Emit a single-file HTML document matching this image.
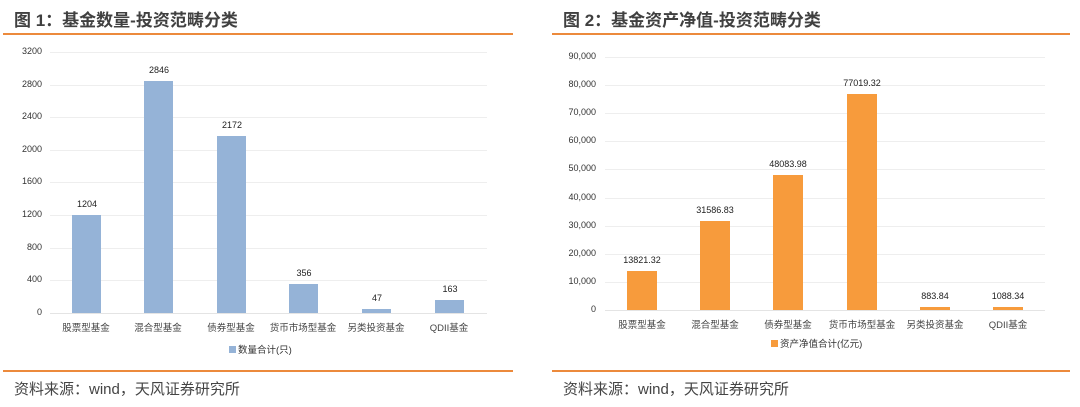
<!DOCTYPE html><html><head><meta charset="utf-8"><style>
body{margin:0;width:1080px;height:407px;background:#fff;position:relative;overflow:hidden;font-family:"Liberation Sans","Noto Sans CJK SC",sans-serif;}
div{position:absolute}
.t{font-size:17px;font-weight:bold;color:#404040;top:6px}
.ol{height:2px;background:#ec8a3c}
.src{font-size:15px;color:#444;top:378px}
.g{height:1px;background:#eee}
.yl{font-size:9px;color:#333;text-align:right;width:50px}
.bb{background:#95b3d7}
.ob{background:#f79b3c}
.v{font-size:9px;color:#222;text-align:center;width:60px}
.c{font-size:9.5px;color:#444;text-align:center;width:80px;top:320px}
.lg{font-size:9.5px;color:#333}
</style></head><body>
<div class="t" style="left:14px">图 1：基金数量-投资范畴分类</div>
<div class="t" style="left:563px">图 2：基金资产净值-投资范畴分类</div>
<div class="ol" style="left:3px;width:510px;top:33px"></div>
<div class="ol" style="left:552px;width:518px;top:33px"></div>
<div class="ol" style="left:3px;width:510px;top:370px"></div>
<div class="ol" style="left:552px;width:518px;top:370px"></div>
<div class="src" style="left:14px">资料来源：wind，天风证券研究所</div>
<div class="src" style="left:563px">资料来源：wind，天风证券研究所</div>

<div class="g" style="left:50px;width:437px;top:52px"></div>
<div class="g" style="left:50px;width:437px;top:85px"></div>
<div class="g" style="left:50px;width:437px;top:117px"></div>
<div class="g" style="left:50px;width:437px;top:150px"></div>
<div class="g" style="left:50px;width:437px;top:182px"></div>
<div class="g" style="left:50px;width:437px;top:215px"></div>
<div class="g" style="left:50px;width:437px;top:248px"></div>
<div class="g" style="left:50px;width:437px;top:280px"></div>
<div class="g" style="left:50px;width:437px;top:313px;background:#e4e4e4"></div>
<div class="yl" style="left:-8px;top:46px">3200</div>
<div class="yl" style="left:-8px;top:79px">2800</div>
<div class="yl" style="left:-8px;top:111px">2400</div>
<div class="yl" style="left:-8px;top:144px">2000</div>
<div class="yl" style="left:-8px;top:176px">1600</div>
<div class="yl" style="left:-8px;top:209px">1200</div>
<div class="yl" style="left:-8px;top:242px">800</div>
<div class="yl" style="left:-8px;top:274px">400</div>
<div class="yl" style="left:-8px;top:307px">0</div>
<div class="bb" style="left:72px;width:29px;top:215px;height:98px"></div>
<div class="bb" style="left:144px;width:29px;top:81px;height:232px"></div>
<div class="bb" style="left:217px;width:29px;top:136px;height:177px"></div>
<div class="bb" style="left:289px;width:29px;top:284px;height:29px"></div>
<div class="bb" style="left:362px;width:29px;top:309px;height:4px"></div>
<div class="bb" style="left:435px;width:29px;top:300px;height:13px"></div>
<div class="v" style="left:57px;top:199px">1204</div>
<div class="v" style="left:129px;top:65px">2846</div>
<div class="v" style="left:202px;top:120px">2172</div>
<div class="v" style="left:274px;top:268px">356</div>
<div class="v" style="left:347px;top:293px">47</div>
<div class="v" style="left:420px;top:284px">163</div>
<div class="c" style="left:46px">股票型基金</div>
<div class="c" style="left:118px">混合型基金</div>
<div class="c" style="left:191px">债券型基金</div>
<div class="c" style="left:263px">货币市场型基金</div>
<div class="c" style="left:336px">另类投资基金</div>
<div class="c" style="left:409px">QDII基金</div>
<div class="bb" style="left:229px;top:346px;width:7px;height:7px"></div>
<div class="lg" style="left:238px;top:342px">数量合计(只)</div>

<div class="g" style="left:605px;width:440px;top:57px"></div>
<div class="g" style="left:605px;width:440px;top:85px"></div>
<div class="g" style="left:605px;width:440px;top:113px"></div>
<div class="g" style="left:605px;width:440px;top:141px"></div>
<div class="g" style="left:605px;width:440px;top:169px"></div>
<div class="g" style="left:605px;width:440px;top:198px"></div>
<div class="g" style="left:605px;width:440px;top:226px"></div>
<div class="g" style="left:605px;width:440px;top:254px"></div>
<div class="g" style="left:605px;width:440px;top:282px"></div>
<div class="g" style="left:605px;width:440px;top:310px;background:#e4e4e4"></div>
<div class="yl" style="left:546px;top:51px">90,000</div>
<div class="yl" style="left:546px;top:79px">80,000</div>
<div class="yl" style="left:546px;top:107px">70,000</div>
<div class="yl" style="left:546px;top:135px">60,000</div>
<div class="yl" style="left:546px;top:163px">50,000</div>
<div class="yl" style="left:546px;top:192px">40,000</div>
<div class="yl" style="left:546px;top:220px">30,000</div>
<div class="yl" style="left:546px;top:248px">20,000</div>
<div class="yl" style="left:546px;top:276px">10,000</div>
<div class="yl" style="left:546px;top:304px">0</div>
<div class="ob" style="left:627px;width:30px;top:271px;height:39px"></div>
<div class="ob" style="left:700px;width:30px;top:221px;height:89px"></div>
<div class="ob" style="left:773px;width:30px;top:175px;height:135px"></div>
<div class="ob" style="left:847px;width:30px;top:94px;height:216px"></div>
<div class="ob" style="left:920px;width:30px;top:307px;height:3px"></div>
<div class="ob" style="left:993px;width:30px;top:307px;height:3px"></div>
<div class="v" style="left:612px;top:255px">13821.32</div>
<div class="v" style="left:685px;top:205px">31586.83</div>
<div class="v" style="left:758px;top:159px">48083.98</div>
<div class="v" style="left:832px;top:78px">77019.32</div>
<div class="v" style="left:905px;top:291px">883.84</div>
<div class="v" style="left:978px;top:291px">1088.34</div>
<div class="c" style="left:602px;top:317px">股票型基金</div>
<div class="c" style="left:675px;top:317px">混合型基金</div>
<div class="c" style="left:748px;top:317px">债券型基金</div>
<div class="c" style="left:822px;top:317px">货币市场型基金</div>
<div class="c" style="left:895px;top:317px">另类投资基金</div>
<div class="c" style="left:968px;top:317px">QDII基金</div>
<div class="ob" style="left:771px;top:340px;width:7px;height:7px"></div>
<div class="lg" style="left:780px;top:336px">资产净值合计(亿元)</div>
</body></html>
